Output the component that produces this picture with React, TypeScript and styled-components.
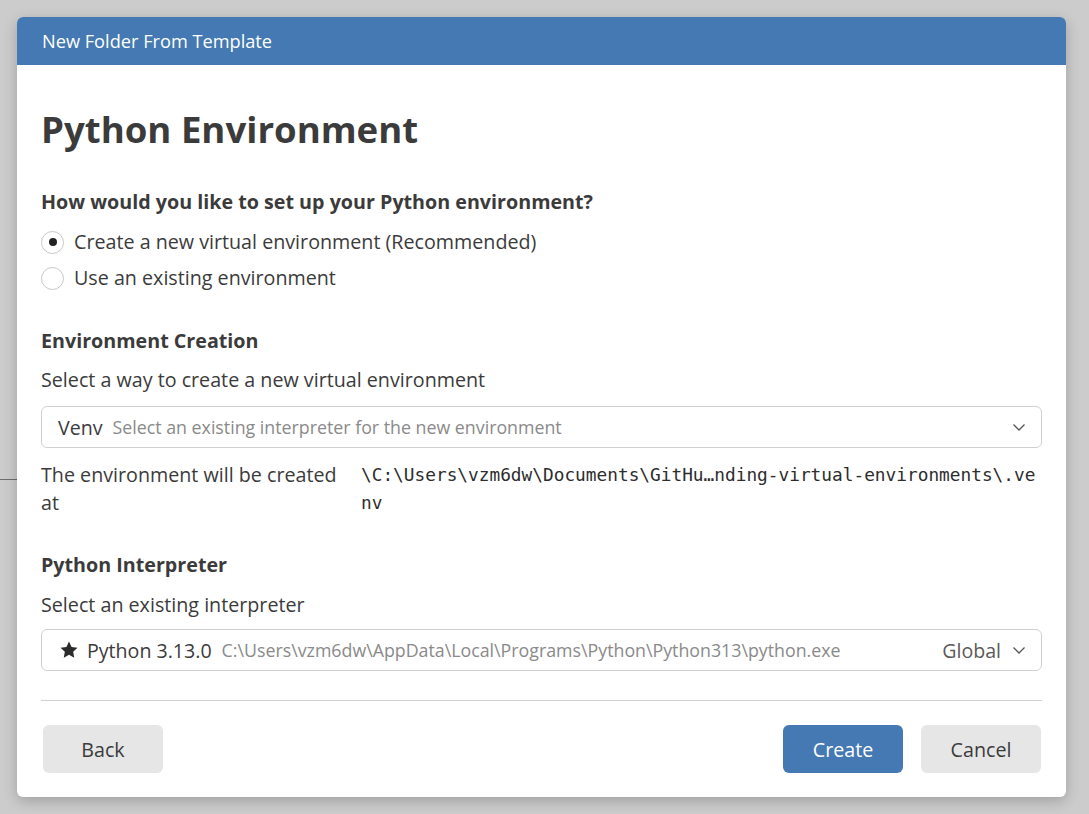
import React from 'react';
import styled, { createGlobalStyle } from 'styled-components';

const GlobalStyle = createGlobalStyle`
  html, body {
    margin: 0;
    padding: 0;
    height: 100%;
    background: #cccccc;
    font-family: 'Open Sans', 'Noto Sans', sans-serif;
  }
  * { box-sizing: border-box; }
`;

const Backdrop = styled.div`
  position: relative;
  width: 1089px;
  height: 814px;
  padding: 17px 23px 17px 17px;
  background: #cccccc;

  &::before {
    content: '';
    position: absolute;
    left: 0;
    top: 479px;
    width: 20px;
    height: 1px;
    background: #6e6e6e;
  }
`;

const Dialog = styled.div`
  position: relative;
  width: 1049px;
  height: 780px;
  background: #ffffff;
  border-radius: 6px;
  overflow: hidden;
  display: flex;
  flex-direction: column;
  box-shadow: 0 4px 14px rgba(0, 0, 0, 0.22);
`;

const TitleBar = styled.div`
  height: 48px;
  background: #4479b3;
  color: #ffffff;
  font-size: 18.2px;
  display: flex;
  align-items: center;
  padding-left: 25px;
`;

const Body = styled.div`
  flex: 1;
  display: flex;
  flex-direction: column;
  padding: 0 24px 0 24px;
  color: #3b3b3b;
`;

const Heading = styled.h1`
  margin: 39px 0 0 0;
  font-size: 36.6px;
  font-weight: 700;
  line-height: 50px;
  color: #3b3b3b;
`;

const SectionTitle = styled.div<{ $top: number }>`
  margin-top: ${(p) => p.$top}px;
  font-size: 19.7px;
  font-weight: 700;
  line-height: 28px;
`;

const Text = styled.div<{ $top?: number }>`
  margin-top: ${(p) => p.$top ?? 0}px;
  font-size: 19.7px;
  line-height: 28px;
`;

const RadioGroup = styled.div`
  display: flex;
  flex-direction: column;
  gap: 8px;
  margin-top: 12px;
`;

const RadioRow = styled.label`
  display: flex;
  align-items: center;
  gap: 10px;
  font-size: 19.7px;
  line-height: 28px;
`;

const RadioCircle = styled.span<{ $checked?: boolean }>`
  width: 23px;
  height: 23px;
  border-radius: 50%;
  border: 1px solid #c8c8c8;
  background: #ffffff;
  display: flex;
  align-items: center;
  justify-content: center;

  &::after {
    content: '';
    width: 8px;
    height: 8px;
    border-radius: 50%;
    background: ${(p) => (p.$checked ? '#222222' : 'transparent')};
  }
`;

const Select = styled.div<{ $top: number }>`
  margin-top: ${(p) => p.$top}px;
  height: 42px;
  border: 1px solid #d0d0d0;
  border-radius: 6px;
  display: flex;
  align-items: center;
  padding: 0 14px 0 16px;
  gap: 10px;
  white-space: nowrap;
  overflow: hidden;
`;

const SelectMain = styled.span`
  font-size: 19.6px;
  color: #3b3b3b;
`;

const SelectHint = styled.span`
  font-size: 17.8px;
  color: #8a8a8a;
  flex: 1;
  overflow: hidden;
  text-overflow: ellipsis;
`;

const SelectTag = styled.span`
  font-size: 19.6px;
  color: #5a5a5a;
`;

const StarIcon = styled.svg`
  margin: 0 -2px 0 1px;
  flex-shrink: 0;
`;

const LocationRow = styled.div`
  display: grid;
  grid-template-columns: 300px 1fr;
  column-gap: 20px;
  margin-top: 13px;
`;

const MonoPath = styled.div`
  font-family: 'DejaVu Sans Mono', 'Liberation Mono', monospace;
  font-size: 17.8px;
  line-height: 28px;
  word-break: break-all;
  color: #2d2d2d;
`;

const Divider = styled.hr`
  margin: 29px 0 0 0;
  border: none;
  border-top: 1px solid #d0d0d0;
`;

const Footer = styled.div`
  display: flex;
  align-items: center;
  gap: 18px;
  margin-top: 24px;
  padding: 0 1px 0 2px;
`;

const Spacer = styled.div`
  flex: 1;
`;

const Button = styled.button<{ $primary?: boolean }>`
  width: 120px;
  height: 48px;
  border: none;
  border-radius: 6px;
  font-family: inherit;
  font-size: 19.7px;
  background: ${(p) => (p.$primary ? '#4479b3' : '#e6e6e6')};
  color: ${(p) => (p.$primary ? '#ffffff' : '#3b3b3b')};
`;

const Chevron = () => (
  <svg width="16" height="16" viewBox="0 0 16 16" fill="none">
    <path d="M2.5 5.5 L8 11 L13.5 5.5" stroke="#555" strokeWidth="1.3" />
  </svg>
);

const Star = () => (
  <StarIcon width="20" height="20" viewBox="0 0 24 24">
    <path
      d="M12 1.8 L15.1 8.3 L22.2 9.2 L17 14.1 L18.3 21.2 L12 17.7 L5.7 21.2 L7 14.1 L1.8 9.2 L8.9 8.3 Z"
      fill="#2b2b2b"
    />
  </StarIcon>
);

export default function App() {
  return (
    <>
      <GlobalStyle />
      <Backdrop>
        <Dialog>
          <TitleBar>New Folder From Template</TitleBar>
          <Body>
            <Heading>Python Environment</Heading>

            <SectionTitle $top={34}>How would you like to set up your Python environment?</SectionTitle>
            <RadioGroup>
              <RadioRow>
                <RadioCircle $checked />
                Create a new virtual environment (Recommended)
              </RadioRow>
              <RadioRow>
                <RadioCircle />
                Use an existing environment
              </RadioRow>
            </RadioGroup>

            <SectionTitle $top={35}>Environment Creation</SectionTitle>
            <Text $top={11}>Select a way to create a new virtual environment</Text>
            <Select $top={12}>
              <SelectMain>Venv</SelectMain>
              <SelectHint>Select an existing interpreter for the new environment</SelectHint>
              <Chevron />
            </Select>

            <LocationRow>
              <Text>The environment will be created at</Text>
              <MonoPath>\C:\Users\vzm6dw\Documents\GitHu…nding-virtual-environments\.venv</MonoPath>
            </LocationRow>

            <SectionTitle $top={34}>Python Interpreter</SectionTitle>
            <Text $top={12}>Select an existing interpreter</Text>
            <Select $top={10}>
              <Star />
              <SelectMain>Python 3.13.0</SelectMain>
              <SelectHint>C:\Users\vzm6dw\AppData\Local\Programs\Python\Python313\python.exe</SelectHint>
              <SelectTag>Global</SelectTag>
              <Chevron />
            </Select>

            <Divider />
            <Footer>
              <Button>Back</Button>
              <Spacer />
              <Button $primary>Create</Button>
              <Button>Cancel</Button>
            </Footer>
          </Body>
        </Dialog>
      </Backdrop>
    </>
  );
}
